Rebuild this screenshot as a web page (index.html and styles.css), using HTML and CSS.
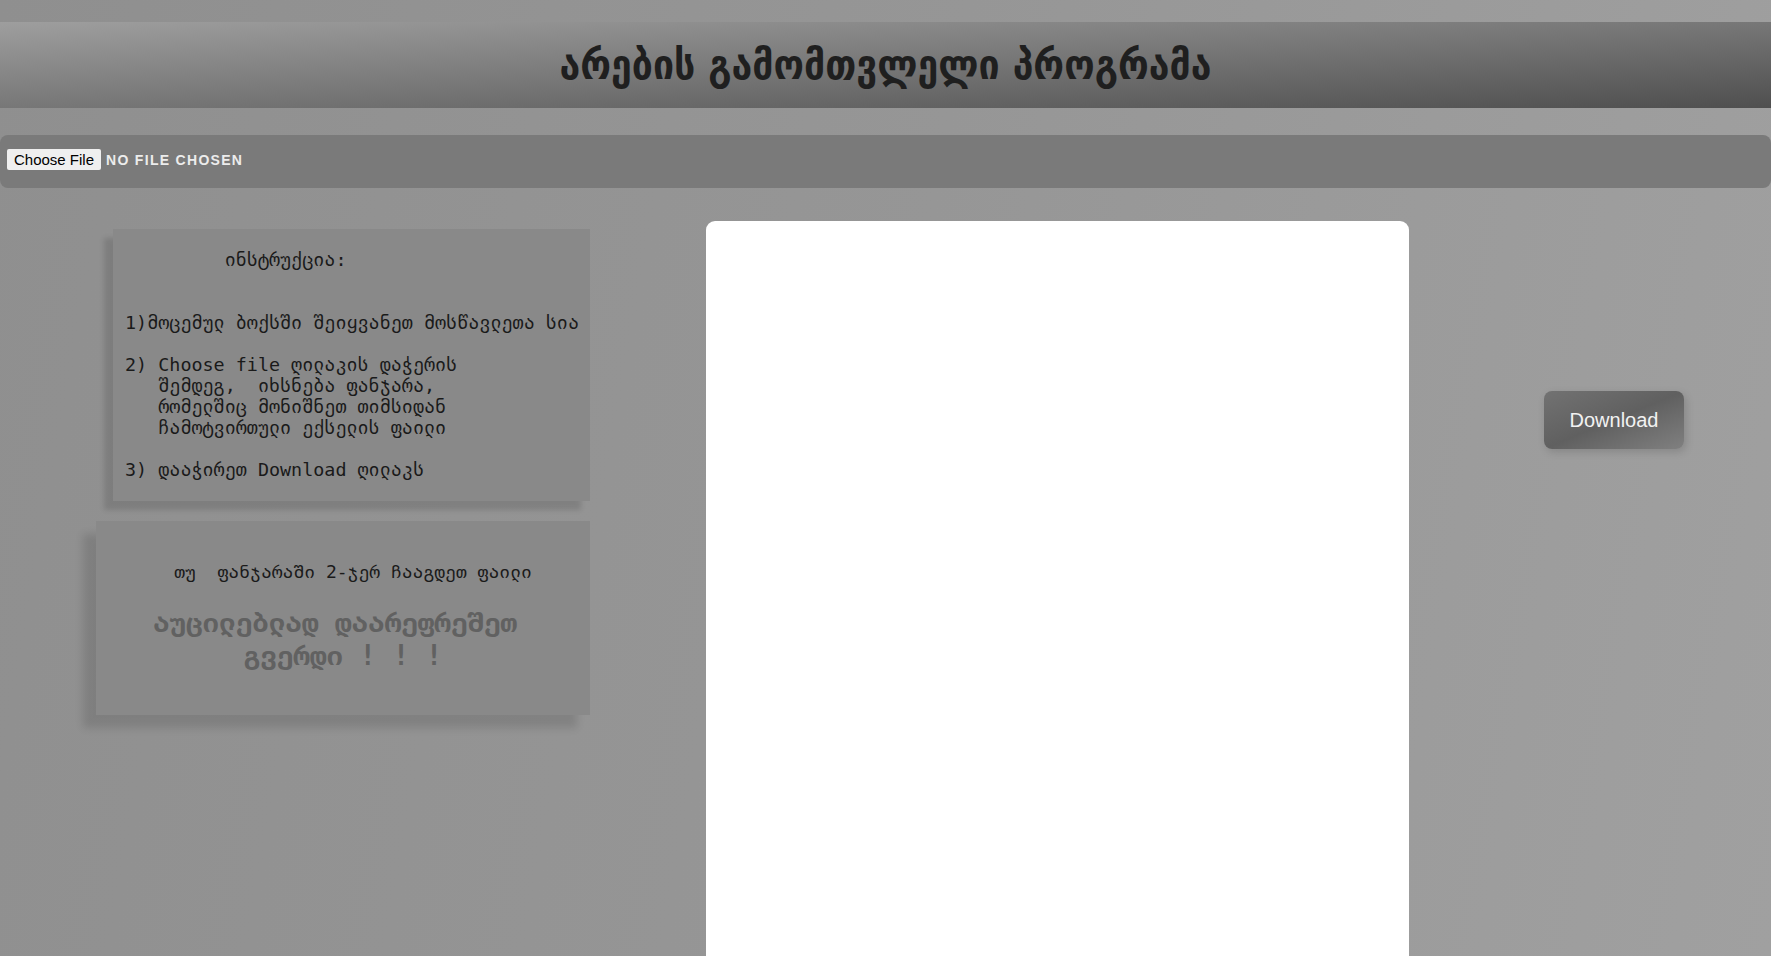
FILE: index.html
```html
<!DOCTYPE html>
<html lang="ka">
<head>
<meta charset="utf-8">
<title>არების გამომთვლელი პროგრამა</title>
<link rel="stylesheet" href="styles.css">
</head>
<body>
<header class="masthead">
  <h1 class="title">არების გამომთვლელი პროგრამა</h1>
</header>
<div class="filebar">
  <label class="file-btn" for="file">Choose File</label>
  <span class="file-name">No file chosen</span>
  <input class="file-input" type="file" id="file">
</div>
<main class="main">
  <div class="side">
<pre class="card card-instr">         ინსტრუქცია:


1)მოცემულ ბოქსში შეიყვანეთ მოსწავლეთა სია

2) Choose file ღილაკის დაჭერის
   შემდეგ,  იხსნება ფანჯარა,
   რომელშიც მონიშნეთ თიმსიდან
   ჩამოტვირთული ექსელის ფაილი

3) დააჭირეთ Download ღილაკს</pre>
    <div class="card card-warn">
      <p class="warn-small">თუ  ფანჯარაში 2-ჯერ ჩააგდეთ ფაილი</p>
      <p class="warn-big"><span class="warn-line1">აუცილებლად დაარეფრეშეთ</span><br>გვერდი ! ! !</p>
    </div>
  </div>
  <div class="sheet"></div>
  <button class="download" type="button">Download</button>
</main>
</body>
</html>
```

FILE: styles.css
```css
* {
  box-sizing: border-box;
}

html,
body {
  margin: 0;
}

body {
  height: 956px;
  overflow: hidden;
  background: linear-gradient(100deg, #8f8f8f 0%, #969696 50%, #a0a0a0 100%);
  font-family: "Liberation Sans", Arial, sans-serif;
}

.masthead {
  margin-top: 22px;
  height: 86px;
  display: flex;
  align-items: center;
  justify-content: center;
  background: linear-gradient(to bottom right, #9e9e9e 0%, #777777 50%, #4f4f4f 100%);
}

.title {
  margin: 0;
  font-family: "DejaVu Sans Condensed", "DejaVu Sans", sans-serif;
  font-stretch: condensed;
  font-weight: bold;
  font-size: 41.6px;
  line-height: 1;
  color: #1f1f1f;
}

.filebar {
  margin-top: 27px;
  height: 53px;
  display: flex;
  align-items: center;
  gap: 5px;
  padding-left: 7px;
  padding-bottom: 4px;
  background: #7a7a7a;
  border-radius: 8px;
}

.file-btn {
  height: 21px;
  display: flex;
  align-items: center;
  padding: 0 7px;
  background: #efefef;
  border-radius: 2px;
  font-size: 15px;
  color: #000;
  cursor: pointer;
}

.file-name {
  font-weight: bold;
  font-size: 14px;
  letter-spacing: 1.3px;
  text-transform: uppercase;
  color: #ececec;
}

.file-input {
  display: none;
}

.main {
  display: flex;
  align-items: flex-start;
}

.side {
  width: 590px;
  padding-left: 96px;
  display: flex;
  flex-direction: column;
  align-items: flex-end;
}

.card {
  background: #898989;
}

.card-instr {
  margin: 41px 0 0;
  padding: 20px 11px 21px 12px;
  font-family: "DejaVu Sans Mono", monospace;
  font-size: 18.4px;
  line-height: 21px;
  color: #1a1a1a;
  box-shadow: -9px 9px 5px rgba(0, 0, 0, 0.13);
}

.card-warn {
  margin-top: 20px;
  width: 494px;
  height: 194px;
  padding-top: 40px;
  text-align: center;
  box-shadow: -13px 13px 8px rgba(0, 0, 0, 0.12);
}

.warn-small {
  margin: 0;
  padding-left: 20px;
  white-space: pre;
  font-family: "DejaVu Sans Mono", monospace;
  font-size: 18px;
  line-height: 21px;
  color: #1a1a1a;
}

.warn-big {
  margin: 24px 0 0;
  font-family: "DejaVu Sans Mono", monospace;
  font-weight: bold;
  font-size: 27.5px;
  line-height: 33px;
  color: #616161;
}

.warn-line1 {
  padding-right: 16px;
}

.sheet {
  margin: 33px 0 0 116px;
  width: 703px;
  height: 735px;
  background: #ffffff;
  border-radius: 9px 9px 0 0;
}

.download {
  margin: 203px 0 0 135px;
  width: 140px;
  height: 58px;
  border: 0;
  border-radius: 8px;
  background: linear-gradient(to bottom right, #727272 0%, #606060 50%, #808080 100%);
  box-shadow: 2px 3px 8px rgba(0, 0, 0, 0.15);
  font-family: "Liberation Sans", Arial, sans-serif;
  font-size: 20px;
  color: #f2f2f2;
  cursor: pointer;
}
```
